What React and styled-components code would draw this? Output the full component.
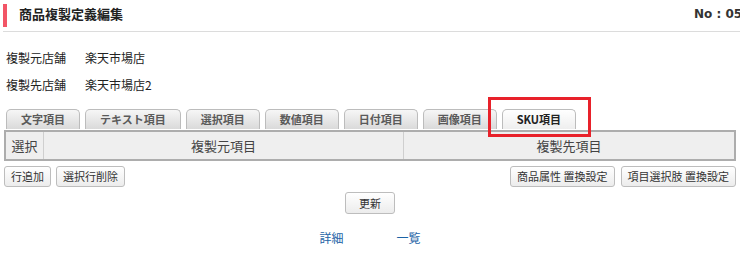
import React from "react";
import styled, { createGlobalStyle } from "styled-components";

const Global = createGlobalStyle`
  html, body { margin: 0; padding: 0; background: #fff; }
  body {
    font-family: "Noto Sans CJK JP", "Noto Sans", sans-serif;
    color: #222;
    overflow: hidden;
    width: 740px;
  }
`;

const Page = styled.div`
  position: relative;
  width: 740px;
  overflow: hidden;
`;

const Header = styled.div`
  display: flex;
  align-items: flex-start;
  margin-left: 3px;
  padding: 4px 0 4px;
  border-bottom: 1px solid #dcdcdc;
`;

const Title = styled.h1`
  flex: 1;
  margin: 0;
  height: 23px;
  line-height: 20px;
  border-left: 4px solid #f25566;
  padding-left: 12px;
  font-size: 13px;
  font-weight: bold;
  color: #222;
`;

const NoLabel = styled.div`
  flex: 0 0 46px;
  min-width: 0;
  white-space: nowrap;
  line-height: 20px;
  font-family: "DejaVu Sans", "Noto Sans", sans-serif;
  font-size: 12px;
  font-weight: bold;
  color: #333;
`;

const Info = styled.div`
  margin-top: 12px;
  padding-left: 6px;
`;

const InfoRow = styled.div`
  display: grid;
  grid-template-columns: 79px auto;
  height: 27px;
  line-height: 27px;
  font-size: 12px;
`;

const TabBar = styled.div`
  position: relative;
  display: flex;
  gap: 5px;
  margin-top: 11px;
  padding-left: 6px;
`;

const Tab = styled.div`
  box-sizing: border-box;
  height: 20px;
  line-height: 19px;
  padding: 0 14px;
  border: 1px solid #bcbcbc;
  border-bottom: none;
  border-radius: 5px 5px 0 0;
  font-size: 11px;
  font-weight: bold;
  color: ${(p) => (p.$active ? "#222" : "#5a5a5a")};
  background: ${(p) =>
    p.$active
      ? "linear-gradient(#ffffff, #eeeeee)"
      : "linear-gradient(#f6f6f6, #dadada)"};
`;

const Highlight = styled.div`
  position: absolute;
  left: 488px;
  top: -12px;
  width: 103px;
  height: 40px;
  box-sizing: border-box;
  border: 3px solid #e8212a;
  pointer-events: none;
`;

const Table = styled.div`
  display: grid;
  grid-template-columns: 37px 360px 1fr;
  margin: 1px 4px 0 4px;
  border: 2px solid #adadad;
  background: #efefef;
`;

const HeadCell = styled.div`
  height: 27px;
  line-height: 27px;
  font-size: 13px;
  color: #444;
  text-align: center;
  border-left: ${(p) => (p.$first ? "none" : "1px solid #cfcfcf")};
`;

const ButtonRow = styled.div`
  display: flex;
  justify-content: space-between;
  margin-top: 5px;
  padding: 0 4px;
`;

const ButtonGroup = styled.div`
  display: flex;
  gap: ${(p) => p.$gap || 5}px;
`;

const Button = styled.button`
  box-sizing: border-box;
  height: ${(p) => p.$h || 21}px;
  padding: 0 ${(p) => p.$px || 6}px;
  border: 1px solid #bdbdbd;
  border-radius: 3px;
  background: linear-gradient(#ffffff, #ececec);
  font-family: "Noto Sans CJK JP", "Noto Sans", sans-serif;
  font-size: 11px;
  color: #333;
  line-height: 1;
  cursor: pointer;
`;

const Center = styled.div`
  display: flex;
  justify-content: center;
  margin-top: 5px;
`;

const Links = styled.div`
  display: flex;
  justify-content: center;
  gap: 53px;
  margin-top: 16px;
`;

const Link = styled.a`
  font-size: 12px;
  line-height: 16px;
  color: #1c63a6;
  text-decoration: none;
`;

const tabs = ["文字項目", "テキスト項目", "選択項目", "数値項目", "日付項目", "画像項目", "SKU項目"];

export default function App() {
  return (
    <Page>
      <Global />
      <Header>
        <Title>商品複製定義編集</Title>
        <NoLabel>No : 0501</NoLabel>
      </Header>
      <Info>
        <InfoRow>
          <span>複製元店舗</span>
          <span>楽天市場店</span>
        </InfoRow>
        <InfoRow>
          <span>複製先店舗</span>
          <span>楽天市場店2</span>
        </InfoRow>
      </Info>
      <TabBar>
        {tabs.map((t, i) => (
          <Tab key={t} $active={i === tabs.length - 1}>
            {t}
          </Tab>
        ))}
        <Highlight />
      </TabBar>
      <Table>
        <HeadCell $first>選択</HeadCell>
        <HeadCell>複製元項目</HeadCell>
        <HeadCell>複製先項目</HeadCell>
      </Table>
      <ButtonRow>
        <ButtonGroup $gap={5}>
          <Button>行追加</Button>
          <Button>選択行削除</Button>
        </ButtonGroup>
        <ButtonGroup $gap={6}>
          <Button>商品属性 置換設定</Button>
          <Button>項目選択肢 置換設定</Button>
        </ButtonGroup>
      </ButtonRow>
      <Center>
        <Button $h={22} $px={13}>更新</Button>
      </Center>
      <Links>
        <Link href="#">詳細</Link>
        <Link href="#">一覧</Link>
      </Links>
    </Page>
  );
}
